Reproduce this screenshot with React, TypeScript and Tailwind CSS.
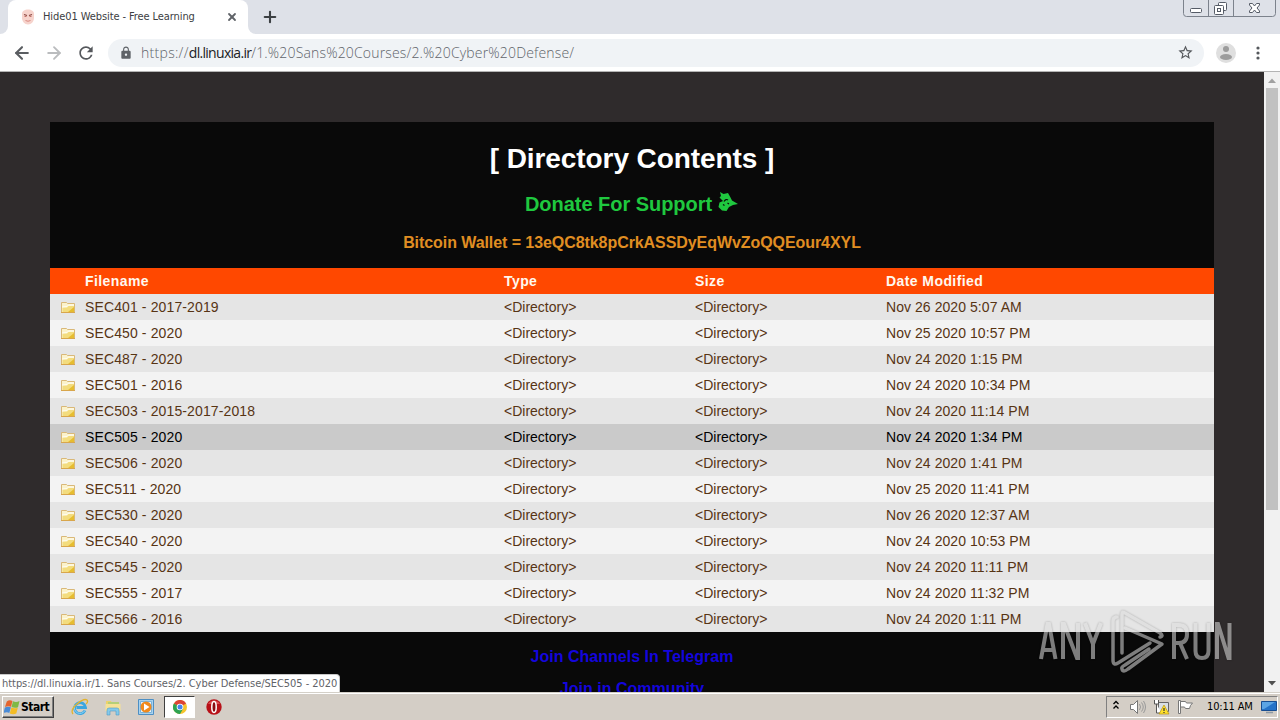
import React from 'react'
import { ArrowLeft, ArrowRight, Plus, X } from 'lucide-react'
import { MdLock, MdRefresh, MdStarBorder } from 'react-icons/md'

interface Entry {
  name: string
  modified: string
  hovered?: boolean
}

const entries: Entry[] = [
  { name: 'SEC401 - 2017-2019', modified: 'Nov 26 2020 5:07 AM' },
  { name: 'SEC450 - 2020', modified: 'Nov 25 2020 10:57 PM' },
  { name: 'SEC487 - 2020', modified: 'Nov 24 2020 1:15 PM' },
  { name: 'SEC501 - 2016', modified: 'Nov 24 2020 10:34 PM' },
  { name: 'SEC503 - 2015-2017-2018', modified: 'Nov 24 2020 11:14 PM' },
  { name: 'SEC505 - 2020', modified: 'Nov 24 2020 1:34 PM', hovered: true },
  { name: 'SEC506 - 2020', modified: 'Nov 24 2020 1:41 PM' },
  { name: 'SEC511 - 2020', modified: 'Nov 25 2020 11:41 PM' },
  { name: 'SEC530 - 2020', modified: 'Nov 26 2020 12:37 AM' },
  { name: 'SEC540 - 2020', modified: 'Nov 24 2020 10:53 PM' },
  { name: 'SEC545 - 2020', modified: 'Nov 24 2020 11:11 PM' },
  { name: 'SEC555 - 2017', modified: 'Nov 24 2020 11:32 PM' },
  { name: 'SEC566 - 2016', modified: 'Nov 24 2020 1:11 PM' },
]

function Favicon() {
  return (
    <svg width="14" height="16" viewBox="0 0 14 16">
      <path d="M1 5C1 2 3.500 .5 7 .5S13 2 13 5v4c0 3-2.500 6.500-6 6.500S1 12 1 9z" fill="#f6d3cc" />
      <path d="M3 5.500l3 1M11 5.500l-3 1" stroke="#8a4640" strokeWidth="1.200" />
      <path d="M3.500 7.500h2M8.500 7.500h2" stroke="#c4736b" />
      <path d="M4.500 11.500q2.500 1.500 5 0" stroke="#d9877f" fill="none" />
    </svg>
  )
}

function WindowControls() {
  return (
    <svg width="94" height="18" viewBox="0 0 94 18" fill="none" stroke="#7c828c">
      <path d="M.5 0v13.500q0 3 3 3h86q3 0 3-3V0M25.500 0v16.500M50.500 0v16.500" />
      <rect x="7.500" y="8.500" width="11" height="4" rx="1" fill="#fff" stroke="#555b66" />
      <rect x="35.500" y="2.500" width="8" height="8" rx="1" fill="#fff" stroke="#555b66" />
      <rect x="31.500" y="5.500" width="9" height="9" rx="1" fill="#fff" stroke="#555b66" />
      <rect x="34.500" y="8.500" width="3" height="3" stroke="#555b66" />
      <path
        d="M66.500 3.500h3l2 2.500 2-2.500h3v1.500L74 8l2.500 3v1.500h-3l-2-2.500-2 2.500h-3V11L69 8l-2.500-3z"
        fill="#fff"
        stroke="#555b66"
      />
    </svg>
  )
}

function TabStrip() {
  return (
    <div className="flex h-[34px] shrink-0 items-start bg-[#dee1e8]">
      <div className="flex h-[34px] w-2 items-end bg-white">
        <div className="h-full w-full rounded-br-lg bg-[#dee1e8]" />
      </div>
      <div className="flex h-[34px] w-[240px] items-center rounded-t-lg bg-white pl-[13px]">
        <Favicon />
        <span className="ml-2 w-[178px] whitespace-nowrap pt-px font-['DejaVu_Sans_Condensed','DejaVu_Sans',sans-serif] text-[11px] tracking-[-0.09px] text-[#3c4043]">
          Hide01 Website - Free Learning
        </span>
        <X className="ml-[5px] size-3" strokeWidth={3.6} color="#5f6368" />
      </div>
      <div className="flex h-[34px] w-2 bg-white">
        <div className="h-full w-full rounded-bl-lg bg-[#dee1e8]" />
      </div>
      <Plus className="ml-[5px] mt-2 size-[18px]" strokeWidth={2.8} color="#3c4043" />
      <div className="ml-auto mr-[3px]">
        <WindowControls />
      </div>
    </div>
  )
}

function Toolbar() {
  return (
    <div className="flex h-[38px] shrink-0 items-center border-b border-[#b4b4b4] bg-white pl-3">
      <ArrowLeft className="size-5" strokeWidth={2.5} color="#5a5d61" />
      <ArrowRight className="ml-3 size-5" strokeWidth={2.2} color="#babcbe" />
      <MdRefresh className="ml-3 size-5" color="#55585c" />
      <div className="ml-3 flex h-7 w-[1096px] items-center rounded-full bg-[#f0f3f6] pl-[11px] pr-2.5">
        <MdLock className="size-3.5" color="#5f6368" />
        <span className="ml-2 whitespace-nowrap pb-px font-['Open_Sans','Noto_Sans',sans-serif] text-[14px] font-light tracking-[0.17px] text-[#5f646a]">
          <span className="tracking-[0.3px]">https://</span>
          <span className="font-normal tracking-[-0.7px] text-[#202124]">dl.linuxia.ir</span>
          /1.%20Sans%20Courses/2.%20Cyber%20Defense/
        </span>
        <MdStarBorder className="ml-auto size-[17px]" color="#55585c" />
      </div>
      <svg className="ml-3" width="20" height="20" viewBox="0 0 20 20">
        <circle cx="10" cy="10" r="10" fill="#dfdfdf" />
        <circle cx="10" cy="6" r="3" fill="#9c9c9c" />
        <ellipse cx="10" cy="14" rx="6" ry="3" fill="#9c9c9c" />
      </svg>
      <svg className="ml-[19px]" width="6" height="16" viewBox="0 0 6 16" fill="#55585c">
        <circle cx="3" cy="3" r="1.600" />
        <circle cx="3" cy="8" r="1.600" />
        <circle cx="3" cy="13" r="1.600" />
      </svg>
    </div>
  )
}

function FolderIcon() {
  return (
    <svg width="16" height="16" viewBox="0 0 16 16">
      <path d="M1.500 13.500v-10h5l1 1h7v9z" fill="#fbf2cb" stroke="#d9b878" />
      <path d="M2.500 8.500H7L8.500 7H14v6H2.500z" fill="#f3dc7e" />
      <path d="M8 13l6-5v5z" fill="#e6bd2f" />
      <path d="M2 8l5-.500L8.500 6H14" stroke="#fffdf2" fill="none" />
      <path d="M1 13.500h14" stroke="#d8a64c" />
    </svg>
  )
}

function SupportGlyph() {
  return (
    <svg className="ml-1.5 mt-[2px]" width="21" height="20" viewBox="0 0 21 20" fill="#1fc83f">
      <path d="M2 0l3.500 2L10 1l2.500 4.500 1.500 3L20 12l-5 1-4 2-2.500 4L4 18.500.5 15l1-4.500L5 9 1.500 5.500 3 4z" />
      <path d="M6 9.500q2-3 4-1.500M5 12.500l1.500 1M9.500 11l1.500 1" stroke="#0a0a0a" strokeWidth="1.200" fill="none" />
    </svg>
  )
}

function Listing() {
  return (
    <div className="text-[14px] leading-[26px]">
      <div className="grid h-[26px] grid-cols-[35px_419px_191px_191px_1fr] bg-[#ff4800] text-sm font-bold leading-[26px] tracking-[0.42px] text-[#fff8ef]">
        <span />
        <span>Filename</span>
        <span>Type</span>
        <span>Size</span>
        <span>Date Modified</span>
      </div>
      {entries.map((entry, i) => (
        <div
          key={entry.name}
          className={`grid h-[26px] grid-cols-[35px_419px_191px_191px_1fr] tracking-[0.06px] ${
            entry.hovered
              ? 'bg-[#cacaca] text-black'
              : i % 2 === 0
                ? 'bg-[#e5e5e5] text-[#573414]'
                : 'bg-[#f3f3f3] text-[#573414]'
          }`}
        >
          <span className="flex items-start pl-2.5 pt-[5px]">
            <FolderIcon />
          </span>
          <span className="tracking-[0.12px]">{entry.name}</span>
          <span className="tracking-[0px]">&lt;Directory&gt;</span>
          <span className="tracking-[0px]">&lt;Directory&gt;</span>
          <span>{entry.modified}</span>
        </div>
      ))}
    </div>
  )
}

function Watermark() {
  return (
    <svg
      className="absolute left-[1036px] top-[606px] opacity-55 drop-shadow-[0_0_1px_rgba(0,0,0,0.45)]"
      width="200"
      height="68"
      viewBox="0 0 200 68"
      fill="none"
      stroke="#dcdcdc"
    >
      <g strokeWidth="4">
        <path d="M5 53L11.500 18h1.500L19.500 53M7.500 44h10" />
        <path d="M27 53V18h1l13 34h1V17" />
        <path d="M49 17l8 21v15M65 17l-8 21" />
        <path d="M138 53V19h5q8 0 8 9t-8 9h-5M144 37l7 16" />
        <path d="M159.500 17v28q0 7 6.500 7t6.500-7V17" />
        <path d="M181 53V18h1l10.500 34h1V17" />
      </g>
      <g strokeWidth="3.500" strokeLinejoin="round" strokeLinecap="round">
        <path d="M81 11h-1q-3 1-3 4v39q0 6 5 3l32-20" />
        <path d="M86 47V8q0-3 3-1l35 20q4 3 0 4" />
        <path d="M89 22l37 16-34 25q-5 4-6 0-1-2 3-4l24-16" />
      </g>
    </svg>
  )
}

function Page() {
  return (
    <div className="flex min-h-0 flex-1 bg-[#2f2b2c]">
      <div className="min-w-0 flex-1 overflow-hidden pl-[50px] pr-[50px] pt-[50px] font-['Liberation_Sans',Arial,sans-serif]">
        <div className="bg-[#090909] text-center font-bold">
          <h1 className="h-[68px] pt-[19px] text-[28px] leading-9 tracking-[-0.08px] text-white">[ Directory Contents ]</h1>
          <h2 className="flex h-[36px] items-start justify-center text-[20px] leading-[28px] tracking-[-0.03px] text-[#1fc83f]">
            Donate For Support
            <SupportGlyph />
          </h2>
          <h3 className="h-[42px] pt-px text-base leading-8 tracking-[-0.07px] text-[#e08e22]">
            Bitcoin Wallet = 13eQC8tk8pCrkASSDyEqWvZoQQEour4XYL
          </h3>
          <div className="text-left font-normal">
            <Listing />
          </div>
          <div className="h-[100px] pt-[9px] text-base leading-8 tracking-[0.02px] text-[#1405dc]">
            <p>Join Channels In Telegram</p>
            <p>Join in Community</p>
          </div>
        </div>
      </div>
      <div className="flex w-4 flex-col items-center bg-[#f1f1f1]">
        <svg width="16" height="16" viewBox="0 0 16 16">
          <path d="M4 11l4-4.500 4 4.500z" fill="#a0a0a0" />
        </svg>
        <div className="h-[422px] w-3 bg-[#c1c1c1]" />
        <svg className="mt-auto" width="16" height="17" viewBox="0 0 16 17">
          <path d="M4 6l4 4.500L12 6z" fill="#505050" />
        </svg>
      </div>
    </div>
  )
}

function ExplorerE() {
  return (
    <svg width="18" height="18" viewBox="0 0 18 18" fill="none">
      <path d="M14 12.500A5.500 5.500 0 1 1 14.500 9.500H5.500" stroke="#3ba6e0" strokeWidth="2.800" />
      <path d="M14 12.500A5.500 5.500 0 0 1 4 7" stroke="#8fd4f5" strokeWidth="1" />
      <path d="M2 16Q-1 12 6 6T16 2q1.500 2-1 4" stroke="#e3b32d" strokeWidth="1.300" />
    </svg>
  )
}

function FilesIcon() {
  return (
    <svg width="18" height="18" viewBox="0 0 18 18">
      <path d="M2 3h5l1 2h7v8H2z" fill="#edd36a" />
      <path d="M4 4h11v3H4z" fill="#b5cf78" />
      <path d="M1.500 6h15v7h-15z" fill="#f6e297" />
      <path d="M3 17v-5q0-2 2-2h8q2 0 2 2v5h-3v-4H6v4z" fill="#85c9ea" stroke="#4f9cc6" strokeWidth=".6" />
    </svg>
  )
}

function PlayerIcon() {
  return (
    <svg width="18" height="18" viewBox="0 0 18 18">
      <path d="M1.500 1.500h15v15h-15z" fill="#a8d2ee" stroke="#4d8fc4" />
      <path d="M3.500 3.500h11v11h-11z" fill="#e6f3fb" stroke="#79b2da" />
      <circle cx="9" cy="9" r="5.500" fill="#f08a1d" />
      <path d="M7 5.500L12.500 9 7 12.500z" fill="#fff" />
    </svg>
  )
}

function ChromeIcon() {
  return (
    <svg width="14" height="14" viewBox="0 0 14 14">
      <circle cx="7" cy="7" r="7" fill="#f6c42c" />
      <path d="M7 7L.9 3.500A7 7 0 0 1 13.100 3.500z" fill="#dc4436" />
      <path d="M7 7L.9 3.500A7 7 0 0 0 7 14l3-5z" fill="#2ea352" />
      <circle cx="7" cy="7" r="3.300" fill="#fff" />
      <circle cx="7" cy="7" r="2.500" fill="#4485ec" />
    </svg>
  )
}

function OperaIcon() {
  return (
    <svg width="16" height="16" viewBox="0 0 16 16">
      <circle cx="8" cy="8" r="7.700" fill="#b81118" />
      <path d="M2 5a7 7 0 0 1 12 0z" fill="#dc4b4f" />
      <ellipse cx="8" cy="8" rx="2.200" ry="5.500" fill="#8a0b10" stroke="#fff" strokeWidth="1.500" />
    </svg>
  )
}

function StartFlag() {
  return (
    <svg width="16" height="16" viewBox="0 0 16 16">
      <path d="M2.800 2.500Q5.500.5 8.500 2L7 7.800Q4.500 6.500 1 8z" fill="#e5652f" />
      <path d="M9 2.200q3 1.500 6.500-.2L14 8.200Q11 9.500 7.500 8z" fill="#7fb944" />
      <path d="M.9 8.500q3-1.500 6-.2L5.300 14Q3 12.500-.5 14z" fill="#4a8bd6" />
      <path d="M7.400 8.500q3 1.500 6.400.2L12.300 14.500q-3 1.500-6.500 0z" fill="#f3bc24" />
    </svg>
  )
}

function Tray() {
  return (
    <div className="ml-auto mr-0.5 flex h-[22px] w-[172px] items-center border border-b-white border-l-[#808080] border-r-white border-t-[#808080]">
      <svg className="mb-1 ml-[5px]" width="8" height="10" viewBox="0 0 8 10" fill="none" stroke="#000" strokeWidth="1.300">
        <path d="M1.500 4L4 1.500 6.500 4M1.500 8.500L4 6l2.500 2.500" />
      </svg>
      <svg className="mb-px ml-[9px]" width="17" height="16" viewBox="0 0 17 16" fill="none" stroke="#777">
        <path d="M1.500 5.500h3l4-4v13l-4-4h-3z" fill="#fff" />
        <path d="M10.500 5q2 3 0 6M12.500 3.500q3.500 4.500 0 9M14.500 2q4 6 0 12" stroke="#999" />
      </svg>
      <svg className="mb-px ml-[7px]" width="17" height="16" viewBox="0 0 17 16">
        <path d="M5.500 3.500h10v9h-10z" fill="#d9dfe4" stroke="#666" />
        <path d="M1.500 1v4h4V1M3.500 5v9h5" fill="#fff" stroke="#555" />
        <path d="M11 6l5 9H6z" fill="#ffe12b" stroke="#b99311" strokeWidth=".7" />
        <path d="M11 9v3M11 13v1" stroke="#333" strokeWidth="1.200" />
      </svg>
      <svg className="mb-px ml-[7px]" width="17" height="16" viewBox="0 0 17 16" fill="#fff" stroke="#777">
        <path d="M1.500 1.500h2v13h-2z" />
        <path d="M3.500 2.500h5l1 1.500h6l-2 2.500 -1 3h-4l-1-1.500h-4z" />
      </svg>
      <span className="ml-[13px] w-[49px] whitespace-nowrap pt-px font-['DejaVu_Sans_Condensed','DejaVu_Sans',sans-serif] text-[11px] tracking-[-0.15px] text-black">
        10:11 AM
      </span>
      <svg className="ml-[5px] shrink-0" width="16" height="14" viewBox="0 0 16 14">
        <path d="M.5 1.500h15v9H.5z" fill="#2472c8" stroke="#174d91" />
        <path d="M1 2h13L3 9H1z" fill="#5ba4e4" />
        <path d="M5 12.500h7" stroke="#8d99a5" strokeWidth="1.500" />
      </svg>
    </div>
  )
}

function Taskbar() {
  return (
    <div className="flex h-7 shrink-0 items-center border-t border-[#d4d0c8] bg-[#d4cec6] pt-px shadow-[inset_0_1px_0_#fff]">
      <div className="ml-[2px] flex h-[22px] w-[52px] items-center border border-b-[#404040] border-l-white border-r-[#404040] border-t-white pl-px shadow-[inset_-1px_-1px_0_#808080]">
        <StartFlag />
        <span className="ml-px font-['DejaVu_Sans_Condensed','DejaVu_Sans',sans-serif] text-[12px] font-bold tracking-[-0.5px] text-black">
          Start
        </span>
      </div>
      <div className="ml-[17px] flex items-center gap-[15px]">
        <ExplorerE />
        <FilesIcon />
        <PlayerIcon />
      </div>
      <div className="ml-[9px] flex h-[22px] w-[31px] items-center justify-center border border-b-white border-l-[#404040] border-r-white border-t-[#404040] bg-white">
        <ChromeIcon />
      </div>
      <div className="ml-[11px]">
        <OperaIcon />
      </div>
      <Tray />
    </div>
  )
}

export default function App() {
  return (
    <div className="relative flex h-[720px] w-[1280px] flex-col overflow-hidden">
      <TabStrip />
      <Toolbar />
      <Page />
      <Taskbar />
      <div className="absolute left-0 top-[674px] h-[18px] w-[340px] overflow-hidden whitespace-nowrap rounded-tr border-r border-t border-[#c8c8c8] bg-white pl-0.5 font-['DejaVu_Sans_Condensed','DejaVu_Sans',sans-serif] text-[11px] leading-[17px] tracking-[-0.05px] text-[#5f6368]">
        https://dl.linuxia.ir/1. Sans Courses/2. Cyber Defense/SEC505 - 2020
      </div>
      <Watermark />
    </div>
  )
}
